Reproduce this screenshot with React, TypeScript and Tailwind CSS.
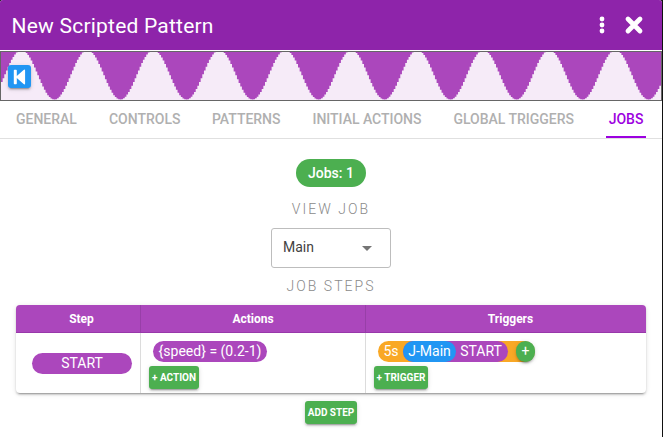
import React from "react";

const STEP = 1.65;

// Stepped sine trace: each sample is held for one column.
function wavePath() {
  let d = "M0 48";
  for (let i = 0; i < 400; i++) {
    const x = i * STEP;
    const y = Math.min(48, Math.max(0, 22.8 - 24.8 * Math.cos((2 * Math.PI * (x - 19.6)) / 66)));
    d += `V${y.toFixed(2)}H${(x + STEP).toFixed(2)}`;
  }
  return d + "V48Z";
}

const tabs = [
  { name: "GENERAL", width: "w-[93px]" },
  { name: "CONTROLS", width: "w-[103px]" },
  { name: "PATTERNS", width: "w-[100.5px]" },
  { name: "INITIAL ACTIONS", width: "w-[141px]" },
  { name: "GLOBAL TRIGGERS", width: "w-[152.5px]" },
];

const shadow = "shadow-[0_3px_1px_-2px_rgba(0,0,0,0.2),0_2px_2px_rgba(0,0,0,0.14),0_1px_5px_rgba(0,0,0,0.12)]";

function SmallButton({ children, width }: { children: React.ReactNode; width: string }) {
  return (
    <button className={`flex h-[23px] ${width} items-center justify-center whitespace-nowrap rounded-[3px] bg-[#4caf50] text-[10px] font-bold text-white ${shadow}`}>
      {children}
    </button>
  );
}

export default function App() {
  return (
    <div className="h-[437px] w-[663px] overflow-hidden bg-[#111] pr-px font-['Roboto',sans-serif]">
      <div className="h-full overflow-hidden rounded-t-[3px] bg-white">
        <header className="flex h-[50px] items-center bg-[#8e24aa] pl-[11.5px] text-white">
          <h1 className="flex-1 pt-[2px] text-[21px] leading-[26px] tracking-[0.22px]">New Scripted Pattern</h1>
          <svg className="mr-[19px]" width="6" height="18" viewBox="0 0 6 18" fill="currentColor">
            <circle cx="3" cy="3" r="2.4" /><circle cx="3" cy="9" r="2.4" /><circle cx="3" cy="15" r="2.4" />
          </svg>
          <svg className="mr-[18px]" width="20" height="20" viewBox="0 0 20 20">
            <path d="M4 4L16 16M16 4L4 16" stroke="currentColor" strokeWidth="4.8" strokeLinecap="round" />
          </svg>
        </header>
        <div className="relative mt-px h-[50px] border border-[#666] bg-[#ab47bc]">
          <svg className="block" width="660" height="48" viewBox="0 0 660 48">
            <path d={wavePath()} fill="#f6ebf8" />
          </svg>
          <button className={`absolute left-[7px] top-[13px] flex h-[23px] w-[23px] items-center justify-center rounded-[3px] bg-[#2196f3] text-white ${shadow}`}>
            <svg width="13" height="16" viewBox="0 0 13 16" fill="currentColor">
              <path d="M.8 1.5Q.8.8 1.5.8H3Q3.8.8 3.8 1.5V7L10.6 1Q12.1 0 12.1 1.5V14.5Q12.1 16 10.6 15L3.8 9V14.5Q3.8 15.2 3 15.2H1.5Q.8 15.2 .8 14.5Z" />
            </svg>
          </button>
        </div>
        <nav className="flex h-[38px] border-b border-[#e0e0e0] pl-4 text-[14px] font-medium leading-[37px] text-[#b0b0b0]">
          {tabs.map((t) => (
            <span key={t.name} className={`${t.width} whitespace-nowrap tracking-[-0.02px]`}>{t.name}</span>
          ))}
          <span className="h-[37px] w-10 border-b-2 border-[#9c00e0] text-center text-[#9c00e0]">JOBS</span>
        </nav>
        <main className="flex flex-col items-center">
          <div className="mt-5 flex h-7 w-[70px] items-center justify-center rounded-full bg-[#4caf50] text-[14px] font-medium text-white">Jobs: 1</div>
          <div className="mt-3 h-5 text-[14px] font-light leading-5 tracking-[2.05px] text-[#8a8a8a]">VIEW JOB</div>
          <div className="mt-[9px] flex h-10 w-[120px] items-center justify-between rounded-[3px] border border-[#bdbdbd] pb-px pl-[11px] pr-[18px] text-[14px] text-[#424242]">
            <span>Main</span>
            <svg className="mt-px" width="10" height="5" viewBox="0 0 10 5"><path d="M0 0H10L5 5Z" fill="#757575" /></svg>
          </div>
          <div className="mt-2 h-5 text-[14px] font-light leading-5 tracking-[2.05px] text-[#8a8a8a]">JOB STEPS</div>
          <section className={`mt-[9px] w-[630px] overflow-hidden rounded-[4px] bg-white ${shadow}`}>
            <div className="grid h-7 grid-cols-[125px_225px_280px] border-b border-[#9838aa] bg-[#ab47bc] text-center text-[12px] font-bold leading-[28px] text-white">
              <div className="h-[27px] border-r border-[#983fa8] pl-[7px]">Step</div>
              <div className="h-[27px] border-r border-[#983fa8]">Actions</div>
              <div className="pl-[9px]">Triggers</div>
            </div>
            <div className="grid h-[60px] grid-cols-[125px_225px_280px] text-[14px] text-white">
              <div className="flex items-center border-r border-[#dcdcdc] pl-4">
                <div className="h-[21px] w-[100px] rounded-full bg-[#ab47bc] text-center leading-[21px]">START</div>
              </div>
              <div className="border-r border-[#dcdcdc] pl-2 pt-2">
                <div className="mb-1 ml-1 h-[21px] w-[114px] rounded-full bg-[#ab47bc] text-center leading-[21px]">{"{speed} = (0.2-1)"}</div>
                <SmallButton width="w-[50px]">+ ACTION</SmallButton>
              </div>
              <div className="pl-2 pt-2">
                <div className="mb-1 ml-1 flex h-[21px] w-[157px] rounded-full bg-[#f9a825] leading-[21px]">
                  <span className="w-[25px] pl-[5.5px]">5s</span>
                  <div className="flex w-[105px] rounded-full bg-[#ab47bc]">
                    <span className="w-[53px] rounded-full bg-[#2196f3] text-center">J-Main</span>
                    <span className="flex-1 pr-[2px] text-center">START</span>
                  </div>
                  <span className={`ml-2 w-[19px] rounded-full bg-[#4caf50] text-center ${shadow}`}>+</span>
                </div>
                <SmallButton width="w-[54px]">+ TRIGGER</SmallButton>
              </div>
            </div>
          </section>
          <div className="mt-2"><SmallButton width="w-[52px]">ADD STEP</SmallButton></div>
        </main>
      </div>
    </div>
  );
}
